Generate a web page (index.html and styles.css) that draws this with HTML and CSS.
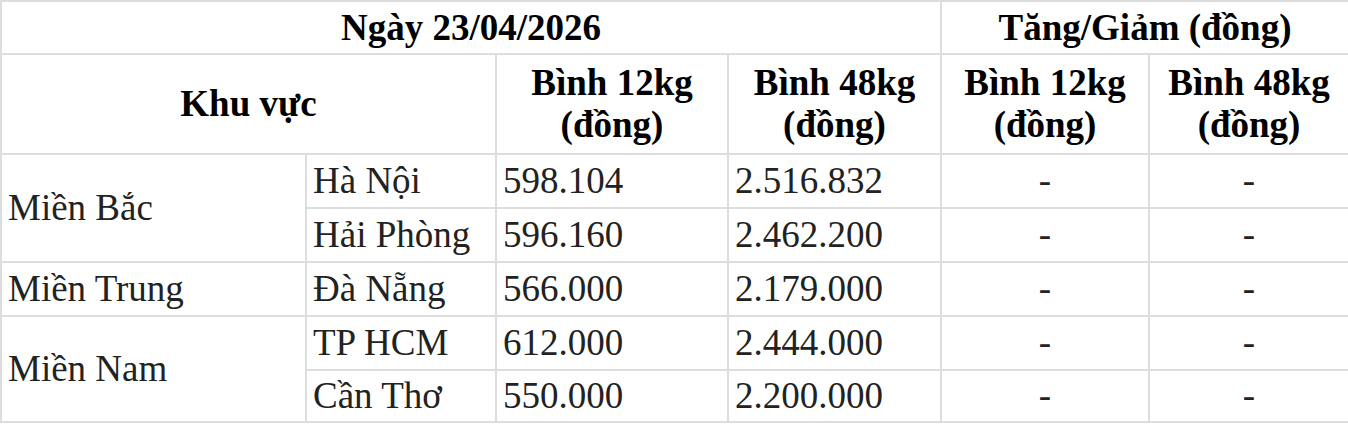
FILE: index.html
```html
<!DOCTYPE html>
<html lang="vi">
<head>
<meta charset="utf-8">
<title>Giá gas</title>
<link rel="stylesheet" href="styles.css">
</head>
<body>
<table class="price">
  <colgroup>
    <col class="c1"><col class="c2"><col class="c3"><col class="c4"><col class="c5"><col class="c6">
  </colgroup>
  <thead>
    <tr class="h1">
      <th colspan="4">Ngày 23/04/2026</th>
      <th colspan="2">Tăng/Giảm (đồng)</th>
    </tr>
    <tr class="h2">
      <th colspan="2">Khu vực</th>
      <th>Bình 12kg<br>(đồng)</th>
      <th>Bình 48kg<br>(đồng)</th>
      <th>Bình 12kg<br>(đồng)</th>
      <th>Bình 48kg<br>(đồng)</th>
    </tr>
  </thead>
  <tbody>
    <tr>
      <td rowspan="2">Miền Bắc</td>
      <td>Hà Nội</td>
      <td>598.104</td>
      <td>2.516.832</td>
      <td class="dash">-</td>
      <td class="dash">-</td>
    </tr>
    <tr>
      <td>Hải Phòng</td>
      <td>596.160</td>
      <td>2.462.200</td>
      <td class="dash">-</td>
      <td class="dash">-</td>
    </tr>
    <tr>
      <td>Miền Trung</td>
      <td>Đà Nẵng</td>
      <td>566.000</td>
      <td>2.179.000</td>
      <td class="dash">-</td>
      <td class="dash">-</td>
    </tr>
    <tr>
      <td rowspan="2">Miền Nam</td>
      <td>TP HCM</td>
      <td>612.000</td>
      <td>2.444.000</td>
      <td class="dash">-</td>
      <td class="dash">-</td>
    </tr>
    <tr>
      <td>Cần Thơ</td>
      <td>550.000</td>
      <td>2.200.000</td>
      <td class="dash">-</td>
      <td class="dash">-</td>
    </tr>
  </tbody>
</table>
</body>
</html>
```

FILE: styles.css
```css
html, body {
  margin: 0;
  padding: 0;
  background: #fff;
}

.price {
  border-collapse: collapse;
  table-layout: fixed;
  width: 1348px;
  font-family: "Liberation Serif", "Times New Roman", serif;
  font-size: 37px;
  color: #222;
  border: 2px solid #cfcfcf;
}

.c1 { width: 305px; }
.c2 { width: 190px; }
.c3 { width: 232px; }
.c4 { width: 213px; }
.c5 { width: 208px; }
.c6 { width: 200px; }

.price th,
.price td {
  border: 2px solid #dddddd;
  padding: 0 6px;
  vertical-align: middle;
  white-space: nowrap;
}

.price th {
  font-weight: bold;
  text-align: center;
  color: #000;
  line-height: 42px;
}

.h1 th {
  height: 51px;
}

.h2 th {
  height: 98px;
}

.price td {
  height: 52px;
  line-height: 40px;
  text-align: left;
}

.price tr:last-child td {
  height: 50px;
}

.price td.dash {
  text-align: center;
}
```
